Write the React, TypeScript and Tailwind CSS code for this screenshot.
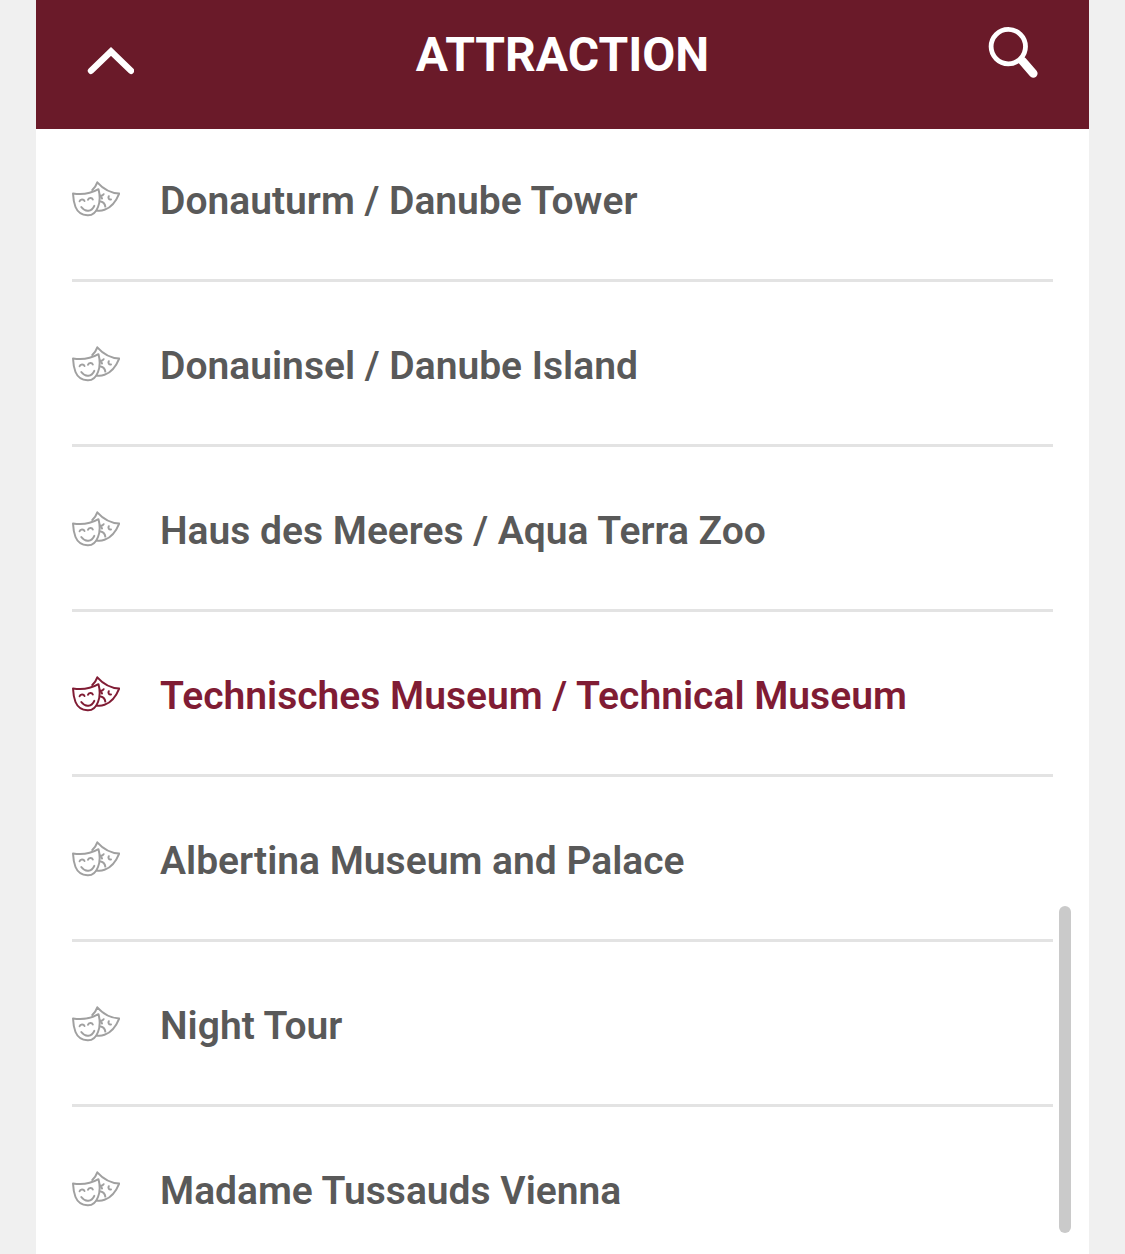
const attractions = [
  { name: "Donauturm / Danube Tower" },
  { name: "Donauinsel / Danube Island" },
  { name: "Haus des Meeres / Aqua Terra Zoo" },
  { name: "Technisches Museum / Technical Museum", active: true },
  { name: "Albertina Museum and Palace" },
  { name: "Night Tour" },
  { name: "Madame Tussauds Vienna" },
];

function MasksIcon() {
  return (
    <svg
      viewBox="0 0 48 36"
      className="h-9 w-12 shrink-0"
      fill="none"
      stroke="currentColor"
      strokeWidth="2"
      strokeLinecap="round"
      strokeLinejoin="round"
      aria-hidden="true"
    >
      {/* smiling mask */}
      <path d="M1 12.5C10 14 19 12.5 26.5 8.2C28 14 28 21 26 26C24 31.5 20 34.5 15.5 34.3C10 34 5.5 31 3.5 26C2 22 1.2 17 1 12.5Z" />
      <path d="M7.6 20.3C8.3 17.9 11.7 17.7 12.5 20" />
      <path d="M16 18.8C16.7 16.4 20 16.2 20.8 18.5" />
      <path d="M9.3 26C13.3 31.5 19.7 30.8 22.3 24.8" />
      {/* sad mask */}
      <path d="M20.3 9C22.5 7 24.2 4.3 25.3 1.3C31.5 8.3 38.5 12 47.2 12.5C44 20.5 39 26.5 32.5 28.8C29.8 29.8 27 30 24.5 29.5" />
      <path d="M28 14.5C29.4 15 30.8 14.4 31.6 13.2M28.5 14.7L30 17.5" />
      <path d="M36.8 15.2C35.9 17.2 36.9 18.8 39 18.5" />
      <path d="M28.7 20.5C31.2 21 33 23 33.3 25.6" />
    </svg>
  );
}

function ChevronUpIcon() {
  return (
    <svg viewBox="0 0 48 30" className="h-[30px] w-12" fill="none" stroke="currentColor" strokeWidth="6.4" strokeLinecap="round" aria-hidden="true">
      <path d="M5 25.8L25 6.5L45 25.8" strokeLinejoin="miter" />
    </svg>
  );
}

function SearchIcon() {
  return (
    <svg viewBox="0 0 52 52" className="size-[52px] overflow-visible" fill="none" stroke="currentColor" strokeLinecap="round" aria-hidden="true">
      <circle cx="21.3" cy="18.6" r="17.2" strokeWidth="4.8" />
      <path d="M35.5 33L46.3 45.5" strokeWidth="8.6" />
    </svg>
  );
}

export default function App() {
  return (
    <div className="h-screen overflow-hidden bg-[#f0f0f0] px-9 font-['Roboto','Liberation_Sans',sans-serif]">
      <main className="relative flex h-full flex-col bg-white">
        <header className="z-10 flex h-[129px] shrink-0 items-start justify-between bg-[#6a1a29] px-[50px] pt-6 text-white">
          <button type="button" aria-label="Collapse" className="flex h-[60px] w-13 items-center pt-3">
            <ChevronUpIcon />
          </button>
          <h1 className="text-[48px] leading-[62px] font-bold">ATTRACTION</h1>
          <button type="button" aria-label="Search" className="flex h-[60px] w-13 items-center">
            <SearchIcon />
          </button>
        </header>

        {/* the list is scrolled slightly under the header */}
        <ul className="-mt-3 flex-1 overflow-hidden px-9">
          {attractions.map(({ name, active }) => (
            <li key={name} className="border-b-3 border-[#e3e3e3]">
              <a
                href="#"
                className={`flex h-[162px] items-center gap-10 pt-0.5 text-[39px] leading-[48px] font-semibold ${
                  active ? "text-[#801c34]" : "text-[#595959]"
                }`}
              >
                <span className={active ? "text-[#801c34]" : "text-[#a0a0a0]"}>
                  <MasksIcon />
                </span>
                <span className="pt-1">{name}</span>
              </a>
            </li>
          ))}
        </ul>

        <div className="absolute right-[18px] bottom-[21px] h-[327px] w-3 rounded-full bg-[#cacaca]" />
      </main>
    </div>
  );
}
